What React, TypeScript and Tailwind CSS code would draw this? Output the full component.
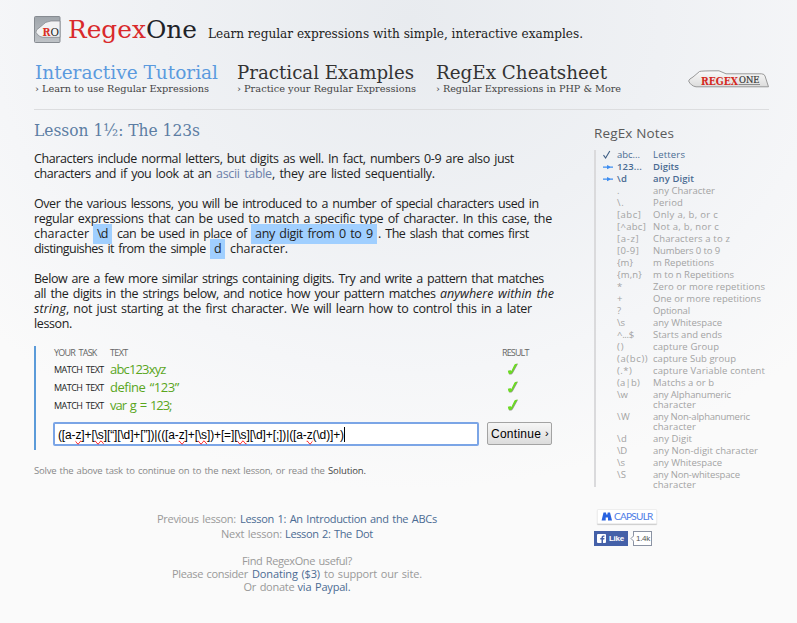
import { useLayoutEffect, useRef, type ReactNode } from "react";

const SERIF = "font-['DejaVu_Serif_Condensed','DejaVu_Serif',serif]";

/** Single line of text tracked so that it is exactly `w` pixels wide. */
function Line({ w, className = "", children }: { w: number; className?: string; children: ReactNode }) {
  const ref = useRef<HTMLSpanElement>(null);
  useLayoutEffect(() => {
    const el = ref.current!;
    el.style.letterSpacing = "0px";
    const n = (el.textContent || " ").length;
    const natural = el.getBoundingClientRect().width;
    if (n > 1) el.style.letterSpacing = `${(w - natural) / (n - 0.5)}px`;
  }, [w]);
  return (
    <span className={`block shrink-0 whitespace-pre ${className}`} style={{ width: w }}>
      <span ref={ref} className="inline-block">{children}</span>
    </span>
  );
}

/** Slab heading squeezed horizontally to `w` pixels. */
function Slab({ w, className = "", children }: { w: number; className?: string; children: ReactNode }) {
  const ref = useRef<HTMLSpanElement>(null);
  useLayoutEffect(() => {
    const el = ref.current!;
    el.style.transform = "none";
    el.style.transform = `scaleX(${w / el.getBoundingClientRect().width})`;
  }, [w]);
  return (
    <span className={`block shrink-0 whitespace-pre ${SERIF} ${className}`} style={{ width: w }}>
      <span ref={ref} className="inline-block origin-left">{children}</span>
    </span>
  );
}

type Note = { code: string; cw: number; lines: [string, number][]; mark?: "check" | "arrow" };

const notes: Note[] = [
  { code: "abc...", cw: 23, lines: [["Letters", 32]], mark: "check" },
  { code: "123...", cw: 25, lines: [["Digits", 26]], mark: "arrow" },
  { code: "\\d", cw: 10, lines: [["any Digit", 41]], mark: "arrow" },
  { code: ".", cw: 3, lines: [["any Character", 62]] },
  { code: "\\.", cw: 7, lines: [["Period", 30]] },
  { code: "[abc]", cw: 24, lines: [["Only a, b, or c", 65]] },
  { code: "[^abc]", cw: 29, lines: [["Not a, b, nor c", 66]] },
  { code: "[a-z]", cw: 22, lines: [["Characters a to z", 77]] },
  { code: "[0-9]", cw: 22, lines: [["Numbers 0 to 9", 67]] },
  { code: "{m}", cw: 16, lines: [["m Repetitions", 61]] },
  { code: "{m,n}", cw: 25, lines: [["m to n Repetitions", 81]] },
  { code: "*", cw: 4, lines: [["Zero or more repetitions", 112]] },
  { code: "+", cw: 5, lines: [["One or more repetitions", 108]] },
  { code: "?", cw: 4, lines: [["Optional", 37]] },
  { code: "\\s", cw: 8, lines: [["any Whitespace", 69]] },
  { code: "^...$", cw: 17, lines: [["Starts and ends", 69]] },
  { code: "()", cw: 7, lines: [["capture Group", 66]] },
  { code: "(a(bc))", cw: 31, lines: [["capture Sub group", 83]] },
  { code: "(.*)", cw: 15, lines: [["capture Variable content", 112]] },
  { code: "(a|b)", cw: 23, lines: [["Matchs a or b", 61]] },
  { code: "\\w", cw: 11, lines: [["any Alphanumeric", 78], ["character", 43]] },
  { code: "\\W", cw: 13, lines: [["any Non-alphanumeric", 97], ["character", 43]] },
  { code: "\\d", cw: 10, lines: [["any Digit", 39]] },
  { code: "\\D", cw: 10, lines: [["any Non-digit character", 105]] },
  { code: "\\s", cw: 8, lines: [["any Whitespace", 69]] },
  { code: "\\S", cw: 9, lines: [["any Non-whitespace", 87], ["character", 43]] },
];

function Mark({ kind }: { kind?: "check" | "arrow" }) {
  if (kind === "check")
    return (
      <svg width="11" height="10" viewBox="0 0 11 10" fill="none" stroke="#3f5f85" strokeWidth="1.1">
        <path d="M.5 5.2 2.6 8 6.8 1" />
      </svg>
    );
  if (kind === "arrow")
    return (
      <svg width="11" height="10" viewBox="0 0 11 10">
        <path d="M0 4.5H4V3L7.2 4.5H10V5.8H7.2L4 7.2V5.8H0Z" fill="#3d8df0" />
      </svg>
    );
  return null;
}

function NoteRow({ note }: { note: Note }) {
  const tone =
    note.mark === "arrow" ? "text-[#4a6b92] font-semibold" : note.mark ? "text-[#4a6b92] font-medium" : "text-[#a3a3a3] font-medium";
  return (
    <li className={`flex pb-[2px] text-[9.5px] leading-[10px] ${tone}`}>
      <span className="h-[10px] w-[14px] shrink-0">
        <Mark kind={note.mark} />
      </span>
      <div className="w-[36px] shrink-0">
        <Line w={note.cw}>{note.code}</Line>
      </div>
      <div>
        {note.lines.map(([t, w]) => (
          <Line key={t} w={w}>{t}</Line>
        ))}
      </div>
    </li>
  );
}

function Tick() {
  return (
    <svg width="12" height="12" viewBox="0 0 12 12">
      <path d="M1.2 8.2 3.6 7.6 4.6 8.2 7.6 2.2 8.4 1.2 11 .8 9.8 3 5.8 10.2 4.4 11.4 2.2 11.6Z" fill="#8f9a86" />
      <path d="M.8 7.8 3.2 7.2 4.4 7.9 7.4 1.8 8.2.9 10.6.5 9.4 2.6 5.2 9.8 3.9 10.9 1.9 11Z" fill="#6cdc22" />
    </svg>
  );
}

function NavItem({ title, tw, sub, sw, active }: { title: string; tw: number; sub: string; sw: number; active?: boolean }) {
  return (
    <a className="block">
      <Slab w={tw} className={`text-[19px] leading-[22px] ${active ? "text-[#5b9ade]" : "text-[#333]"}`}>{title}</Slab>
      <Slab w={sw} className="text-[10px] leading-[12px] text-[#444]">{sub}</Slab>
    </a>
  );
}

const tasks: [string, number][] = [
  ["abc123xyz", 56],
  ["define “123”", 69],
  ["var g = 123;", 62],
];

const Bad = ({ children }: { children: string }) => (
  <span className="[text-decoration-line:spelling-error]">{children}</span>
);

export default function App() {
  return (
    <div className="h-[623px] w-[797px] overflow-hidden bg-[#fafafa] bg-[radial-gradient(ellipse_560px_470px_at_410px_20px,#e8ebef_0%,#eff1f4_45%,#f5f6f8_75%,#fafafa_100%)] pl-[34px] font-['Open_Sans','Noto_Sans',sans-serif] text-[#222]">
      <header className="w-[735px]">
        <div className="flex pt-[16px]">
          <svg width="27" height="27" viewBox="0 0 27 27">
            <defs>
              <linearGradient id="tile" x2="0" y2="1">
                <stop stopColor="#9fa5ab" />
                <stop offset="1" stopColor="#bfc3c7" />
              </linearGradient>
            </defs>
            <rect x=".5" y=".5" width="25.5" height="26" rx="1" fill="url(#tile)" stroke="#868b91" />
            <path d="M26 5H17Q11 5.5 8 9.5L2.5 14Q1 16.5 3.5 18.5Q5.500 21 9 21.300H26Z" fill="#f1f2f3" stroke="#7b8085" strokeWidth=".7" />
            <text x="8.500" y="19.800" fontFamily="DejaVu Serif" fontSize="11.500" fontWeight="bold" fill="#d93025" textLength="8" lengthAdjust="spacingAndGlyphs">R</text>
            <text x="16.500" y="19.800" fontFamily="DejaVu Serif" fontSize="10.500" fill="#222" textLength="8.500" lengthAdjust="spacingAndGlyphs">O</text>
          </svg>
          <Slab w={129} className="-mt-[2px] ml-[7px] text-[25px] leading-[32px] text-[#1f2328]">
            <span className="text-[#d9292b]">Regex</span>One
          </Slab>
          <Slab w={375} className="mt-[9px] ml-[11px] text-[13px] leading-[18px] text-[#222]">
            Learn regular expressions with simple, interactive examples.
          </Slab>
        </div>
        <div className="flex h-[64px] border-b border-[#dcdddf] pt-[15px]">
          <nav className="flex h-[36px]">
            <div className="w-[203px] pl-px"><NavItem active title="Interactive Tutorial" tw={183} sub="› Learn to use Regular Expressions" sw={174} /></div>
            <div className="w-[199px]"><NavItem title="Practical Examples" tw={177} sub="› Practice your Regular Expressions" sw={179} /></div>
            <div className="w-[185px]"><NavItem title="RegEx Cheatsheet" tw={171} sub="› Regular Expressions in PHP & More" sw={185} /></div>
          </nav>
          <svg className="mt-[9px] ml-auto" width="81" height="19" viewBox="0 0 81 19">
            <defs>
              <linearGradient id="badge" x2="0" y2="1">
                <stop stopColor="#fafafa" />
                <stop offset="1" stopColor="#dcdcdc" />
              </linearGradient>
            </defs>
            <path d="M.6 11Q1 9 5 7L11.500 1.500Q13 .8 31 .8L38 3.800H73.500Q76.500 4 77 6L80.500 16.800H8Q3 16 .6 11Z" fill="url(#badge)" stroke="#8e8e8e" strokeWidth=".9" />
            <text x="13" y="14.500" fontFamily="DejaVu Serif" fontSize="11" fontWeight="bold" fill="#d42a22" textLength="37" lengthAdjust="spacingAndGlyphs">REGEX</text>
            <text x="51" y="13" fontFamily="DejaVu Serif" fontSize="9" fill="#333" stroke="#333" strokeWidth=".2" textLength="20.500" lengthAdjust="spacingAndGlyphs">ONE</text>
            <path d="M50.500 14.500H72" stroke="#666" strokeWidth=".7" />
          </svg>
        </div>
      </header>

      <div className="flex">
        <main className="w-[560px] shrink-0 pt-[11px]">
          <Slab w={166} className="text-[16.500px] leading-[20px] text-[#5c7da3]">Lesson 1½: The 123s</Slab>

          <div className="mt-[10px] flex flex-col gap-[15px] text-[12.500px] leading-[15px] [word-spacing:1.500px]">
            <p>
              <Line w={480}>Characters include normal letters, but digits as well. In fact, numbers 0-9 are also just</Line>
              <span className="flex">
                <Line w={182}>{"characters and if you look at an "}</Line>
                <Line w={56} className="text-[#6c7fa8]">ascii table</Line>
                <Line w={163}>, they are listed sequentially.</Line>
              </span>
            </p>
            <p>
              <Line w={505}>Over the various lessons, you will be introduced to a number of special characters used in</Line>
              <Line w={518}>regular expressions that can be used to match a specific type of character. In this case, the</Line>
              <span className="flex">
                <Line w={55}>character</Line>
                <span className="-mt-[2px] -mb-[3px] ml-[4px] h-[20px] bg-[#a0cfff] px-[4px] pt-[2px]"><Line w={11}>\d</Line></span>
                <Line w={130} className="ml-[5px]">can be used in place of</Line>
                <span className="-mt-[2px] -mb-[3px] ml-[4px] h-[20px] bg-[#a0cfff] px-[4px] pt-[2px]"><Line w={118}>any digit from 0 to 9</Line></span>
                <Line w={151} className="ml-px">. The slash that comes first</Line>
              </span>
              <span className="flex">
                <Line w={172}>distinguishes it from the simple</Line>
                <span className="-mt-[2px] -mb-[3px] ml-[4px] h-[20px] bg-[#a0cfff] px-[4px] pt-[2px]"><Line w={7}>d</Line></span>
                <Line w={58} className="ml-[5px]">character.</Line>
              </span>
            </p>
            <p>
              <Line w={510}>Below are a few more similar strings containing digits. Try and write a pattern that matches</Line>
              <span className="flex">
                <Line w={406}>{"all the digits in the strings below, and notice how your pattern matches "}</Line>
                <Line w={114} className="italic">anywhere within the</Line>
              </span>
              <span className="flex">
                <Line w={32} className="italic">string</Line>
                <Line w={466}>, not just starting at the first character. We will learn how to control this in a later</Line>
              </span>
              <Line w={38}>lesson.</Line>
            </p>
          </div>

          <section className="mt-[15px] h-[104px] border-l-2 border-[#5b9bd9] pl-[18px]">
            <div className="flex pt-[2px] text-[9px] leading-[10px] text-[#666] [word-spacing:2px]">
              <Line w={43} className="mr-[13px]">YOUR TASK</Line>
              <Line w={18} className="mr-[374px]">TEXT</Line>
              <Line w={27}>RESULT</Line>
            </div>
            <div className="pt-[2px] [word-spacing:1.500px]">
              {tasks.map(([text, w]) => (
                <div key={text} className="flex h-[18px] items-center">
                  <Line w={50} className="mr-[6px] pt-px text-[9px] leading-[16px] font-medium text-[#222]">MATCH TEXT</Line>
                  <div className="w-[397px] text-[13px] leading-[18px] text-[#5aa61d]"><Line w={w}>{text}</Line></div>
                  <Tick />
                </div>
              ))}
            </div>
            <div className="-ml-px flex pt-[8px]">
              <div className="flex h-[24px] w-[426px] items-center rounded-[2px] border-2 border-[#7ba5e6] bg-white pt-px pl-[3px] font-['Liberation_Sans',Arial,sans-serif] text-[12px] leading-[16px] text-black">
                <Line w={286}>
                  ([a-<Bad>z</Bad>]+[<Bad>\s</Bad>][“][\d]+[”])|(([a-<Bad>z</Bad>]+[<Bad>\s</Bad>])+[=][<Bad>\s</Bad>][\d]+[;])|([a-<Bad>z</Bad>(\d)]+)
                </Line>
                <span className="h-[15px] w-px bg-black" />
              </div>
              <button className="ml-[8px] flex h-[23px] w-[65px] items-center rounded-[2px] border border-[#a3a3a3] bg-linear-to-b from-[#f6f6f6] to-[#dcdcdc] pl-[3px] font-['Liberation_Sans',Arial,sans-serif] text-[12px] text-black">
                <Line w={50}>Continue</Line>
                <span className="ml-[4px] text-[11px]">›</span>
              </button>
            </div>
          </section>

          <p className="mt-[14px] flex text-[9.500px] leading-[14px] text-[#888] [word-spacing:1px]">
            <Line w={294}>{"Solve the above task to continue on to the next lesson, or read the "}</Line>
            <Line w={38} className="text-[#444]">Solution.</Line>
          </p>

          <footer className="mt-[33px] flex w-[526px] flex-col items-center text-[11px] leading-[15px] text-[#999] [word-spacing:1px]">
            <p className="flex gap-[4px]"><Line w={79}>Previous lesson:</Line><Line w={197} className="text-[#4b6b93]">Lesson 1: An Introduction and the ABCs</Line></p>
            <p className="flex gap-[3px]"><Line w={61}>Next lesson:</Line><Line w={88} className="text-[#4b6b93]">Lesson 2: The Dot</Line></p>
            <div className="mt-[13px] flex flex-col items-center leading-[13px]">
              <Line w={110}>Find RegexOne useful?</Line>
              <p className="flex gap-[4px]"><Line w={76}>Please consider</Line><Line w={68} className="text-[#4b6b93]">Donating ($3)</Line><Line w={98}>to support our site.</Line></p>
              <p className="flex gap-[3px]"><Line w={51}>Or donate</Line><Line w={53} className="text-[#4b6b93]">via Paypal.</Line></p>
            </div>
          </footer>
        </main>

        <aside className="pt-[15px]">
          <h2 className="text-[13.500px] leading-[17px] text-[#5a5a5a]"><Line w={80}>RegEx Notes</Line></h2>
          <ul className="mt-[8px] h-[337px] border-l-2 border-[#dadadc] pl-[7px]">
            {notes.map((n, i) => <NoteRow key={i} note={n} />)}
          </ul>
          <div className="mt-[22px] ml-[3px] flex h-[15px] w-[60px] items-center rounded-[1px] border border-[#eee] bg-white pl-[3px] shadow-[0_1px_1px_#ccc]">
            <svg width="12" height="9" viewBox="0 0 12 9">
              <path d="M2.500 .5H5L5.300 2.500H6.400L6.700 .5H9L11 8.500H7V5.500H4.700V8.500H.6Z" fill="#2862e0" />
            </svg>
            <span className="ml-[1px] font-['Lato',sans-serif] text-[10px] leading-[13px] text-[#4b7be6]">
              <Line w={39}>CAPSULR</Line>
            </span>
          </div>
          <div className="mt-[7px] flex h-[15px]">
            <div className="flex w-[34px] items-center bg-[#4460a8] pl-[3px] text-white">
              <svg width="9" height="9" viewBox="0 0 9 9">
                <rect width="9" height="9" rx="1" fill="#fff" />
                <path d="M4.500 9V5.400H3.300V4H4.500V3.100Q4.600 1.400 6.300 1.400H7.500V2.700H6.700Q6 2.700 6 3.400V4H7.500L7.200 5.400H6V9Z" fill="#4460a8" />
              </svg>
              <Line w={15} className="ml-[3px] font-['Liberation_Sans',sans-serif] text-[8px] leading-[13px] font-bold">Like</Line>
            </div>
            <div className="ml-[2px] flex">
              <svg className="relative z-10 -mr-px" width="4" height="15" viewBox="0 0 4 15">
                <path d="M4 4.500 1 7.500 4 10.500" fill="#fff" stroke="#8b93a3" />
              </svg>
              <div className="flex w-[19px] items-center border border-[#8b93a3] bg-white pl-[2px] font-['Liberation_Sans',sans-serif] text-[8px] leading-[13px] text-[#555]">
                <Line w={14}>1.4k</Line>
              </div>
            </div>
          </div>
        </aside>
      </div>
    </div>
  );
}
